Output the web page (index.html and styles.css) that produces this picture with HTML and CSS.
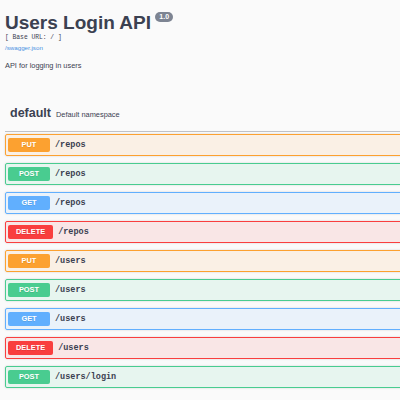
FILE: index.html
```html
<!DOCTYPE html>
<html>
<head>
<meta charset="utf-8">
<link rel="stylesheet" href="styles.css">
</head>
<body>
<div class="wrapper">
  <div class="info">
    <h2 class="title">Users Login API <span class="version">1.0</span></h2>
    <div class="base-url">[ Base URL: / ]</div>
    <a class="spec-link" href="#">/swagger.json</a>
    <div class="desc">API for logging in users</div>
  </div>
  <div class="tag">
    <span class="tag-name">default</span>
    <span class="tag-desc">Default namespace</span>
  </div>
  <div class="ops">
    <div class="op put"><span class="method">PUT</span><span class="path">/repos</span></div>
    <div class="op post"><span class="method">POST</span><span class="path">/repos</span></div>
    <div class="op get"><span class="method">GET</span><span class="path">/repos</span></div>
    <div class="op delete"><span class="method">DELETE</span><span class="path">/repos</span></div>
    <div class="op put"><span class="method">PUT</span><span class="path">/users</span></div>
    <div class="op post"><span class="method">POST</span><span class="path">/users</span></div>
    <div class="op get"><span class="method">GET</span><span class="path">/users</span></div>
    <div class="op delete"><span class="method">DELETE</span><span class="path">/users</span></div>
    <div class="op post"><span class="method">POST</span><span class="path">/users/login</span></div>
  </div>
</div>
</body>
</html>
```
FILE: styles.css
```css
html, body {
  margin: 0;
  padding: 0;
  background: #fafafa;
  font-family: "Liberation Sans", Arial, sans-serif;
  color: #3b4151;
}
.wrapper {
  box-sizing: border-box;
  width: 400px;
  height: 400px;
  overflow: hidden;
  padding: 0 0 0 5px;
}
.info {
  padding-top: 13px;
}
.title {
  margin: 0;
  font-size: 19px;
  line-height: 20px;
  font-weight: bold;
  color: #3b4151;
  white-space: nowrap;
}
.version {
  display: inline-block;
  vertical-align: top;
  margin-top: -1px;
  margin-left: -1px;
  background: #7d8492;
  color: #fff;
  font-size: 7px;
  line-height: 10px;
  padding: 0 4px;
  border-radius: 6px;
  font-weight: bold;
}
.base-url {
  margin-top: 1px;
  font-family: "Liberation Mono", monospace;
  font-size: 6.3px;
  line-height: 7px;
  color: #3b4151;
}
.spec-link {
  display: block;
  margin-top: 3px;
  font-size: 6.2px;
  line-height: 7px;
  color: #4990e2;
  text-decoration: none;
}
.desc {
  margin-top: 11px;
  font-size: 7.4px;
  line-height: 8px;
}
.tag {
  margin-top: 30px;
  display: flex;
  align-items: baseline;
  gap: 5px;
  padding: 4px 10px 7px 5px;
  line-height: 18px;
  border-bottom: 1px solid rgba(59, 65, 81, 0.3);
  margin-right: -5px;
}
.tag-name {
  font-size: 12.5px;
  font-weight: bold;
}
.tag-desc {
  font-size: 7.4px;
}
.ops {
  padding-top: 2px;
  margin-right: -8px;
}
.op {
  display: flex;
  align-items: center;
  padding: 3px 2px;
  margin-bottom: 7px;
  border: 1px solid;
  border-radius: 2px;
  box-shadow: 0 0 2px rgba(0, 0, 0, 0.19);
}
.method {
  box-sizing: border-box;
  min-width: 42px;
  height: 14px;
  padding: 0 8px;
  border-radius: 2px;
  color: #fff;
  font-size: 7.4px;
  line-height: 14px;
  font-weight: bold;
  text-align: center;
  text-shadow: 0 1px 0 rgba(0, 0, 0, 0.1);
}
.path {
  padding: 0 5px;
  font-family: "Liberation Mono", monospace;
  font-size: 8.5px;
  font-weight: bold;
  color: #3b4151;
}
.put { border-color: #fca130; background: rgba(252, 161, 48, 0.1); }
.put .method { background: #fca130; }
.post { border-color: #49cc90; background: rgba(73, 204, 144, 0.1); }
.post .method { background: #49cc90; }
.get { border-color: #61affe; background: rgba(97, 175, 254, 0.1); }
.get .method { background: #61affe; }
.delete { border-color: #f93e3e; background: rgba(249, 62, 62, 0.1); }
.delete .method { background: #f93e3e; }
```
